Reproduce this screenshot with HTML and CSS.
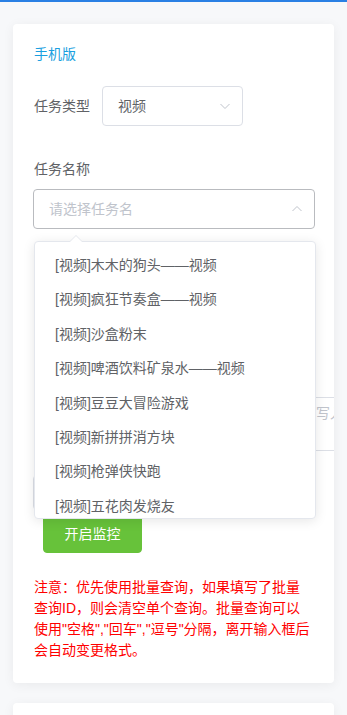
FILE: index.html
```html
<!DOCTYPE html>
<html lang="zh-CN">
<head>
  <meta charset="UTF-8">
  <meta name="viewport" content="width=device-width, initial-scale=1.0">
  <title>任务监控 - 手机版</title>
  <link rel="stylesheet" href="styles.css">
</head>
<body>
  <div class="topbar"></div>

  <main class="page">
    <section class="card">
      <div class="card-title">手机版</div>

      <form class="form">
        <div class="form-row inline">
          <label class="form-label">任务类型</label>
          <div class="select small">
            <span class="select-value">视频</span>
            <svg class="select-arrow" viewBox="0 0 14 14"><polyline points="2.5,5 7,9.5 11.5,5"/></svg>
          </div>
        </div>

        <div class="form-row stacked">
          <label class="form-label">任务名称</label>
          <div class="select wide is-open">
            <span class="select-placeholder">请选择任务名</span>
            <svg class="select-arrow" viewBox="0 0 14 14"><polyline points="2.5,9 7,4.5 11.5,9"/></svg>
          </div>
        </div>

        <!-- covered by the open dropdown, only the right end shows -->
        <div class="form-row inline batch">
          <span class="form-label"></span>
          <textarea class="textarea" rows="2" placeholder="批量查询时，可以在这里一次性写入多个ID"></textarea>
        </div>

        <div class="form-row">
          <input class="input short" type="text">
        </div>

        <button type="button" class="btn-success">开启监控</button>
      </form>

      <p class="notice">注意：优先使用批量查询，如果填写了批量查询ID，则会清空单个查询。批量查询可以使用"空格","回车","逗号"分隔，离开输入框后会自动变更格式。</p>

      <!-- open dropdown of 任务名称 -->
      <div class="dropdown">
        <div class="dropdown-wrap">
          <ul class="dropdown-list">
            <li>[视频]木木的狗头——视频</li>
            <li>[视频]疯狂节奏盒——视频</li>
            <li>[视频]沙盒粉末</li>
            <li>[视频]啤酒饮料矿泉水——视频</li>
            <li>[视频]豆豆大冒险游戏</li>
            <li>[视频]新拼拼消方块</li>
            <li>[视频]枪弹侠快跑</li>
            <li>[视频]五花肉发烧友</li>
          </ul>
        </div>
      </div>
    </section>

    <section class="card next"></section>
  </main>
</body>
</html>
```

FILE: styles.css
```css
body {
  margin: 0;
  background-color: #f7f8fa;
  font-family: "Liberation Sans", "Noto Sans CJK SC", sans-serif;
  color: #606266;
  font-size: 14px;
}

.topbar {
  height: 2px;
  background-color: #2a80e4;
}

.page {
  padding: 0 13px;
}

.card {
  position: relative;
  margin-top: 22px;
  padding: 20px 19px 22px 20px;
  background-color: #fff;
  border-radius: 4px;
  box-shadow: 0 2px 12px rgba(0, 0, 0, 0.06);
  overflow: hidden;
}

.card.next {
  margin-top: 20px;
  height: 200px;
}

.card-title {
  font-size: 14px;
  line-height: 20px;
  color: #1a9fe0;
  padding-left: 1px;
}

.form {
  margin: 0;
}

.form-row.inline {
  display: flex;
  align-items: center;
  margin-top: 22px;
}

.form-row.inline .form-label {
  width: 69px;
  flex: none;
  line-height: 40px;
  padding-left: 1px;
  box-sizing: border-box;
}

.form-row.stacked {
  margin-top: 33px;
}

.form-row.stacked .form-label {
  display: block;
  line-height: 20px;
  margin-bottom: 10px;
  padding-left: 1px;
}

.form-row.batch {
  margin-top: 168px;
  align-items: flex-start;
}

.select {
  position: relative;
  box-sizing: border-box;
  height: 40px;
  border: 1px solid #dcdfe6;
  border-radius: 4px;
  padding: 0 30px 0 15px;
  line-height: 38px;
  background-color: #fff;
}

.select.small {
  width: 141px;
}

.select.wide {
  width: 100%;
}

.select.is-open {
  border-color: #b9bbbf;
}

.select-value {
  color: #606266;
}

.select-placeholder {
  color: #c0c4cc;
}

.select-arrow {
  position: absolute;
  right: 10px;
  top: 12px;
  width: 14px;
  height: 14px;
  fill: none;
  stroke: #c0c4cc;
  stroke-width: 1;
}

.textarea {
  display: block;
  flex: none;
  width: 260px;
  height: 54px;
  box-sizing: border-box;
  margin: 0;
  padding: 5px 15px 5px 17px;
  border: 1px solid #dcdfe6;
  border-radius: 4px;
  font-family: inherit;
  font-size: 14px;
  line-height: 21px;
  resize: none;
  color: #606266;
}

.textarea::placeholder {
  color: #c0c4cc;
}

.input {
  display: block;
  box-sizing: border-box;
  margin-top: 24px;
  height: 35px;
  padding: 0 15px;
  border: 1px solid #dcdfe6;
  border-radius: 4px;
  font-family: inherit;
  font-size: 14px;
}

.input.short {
  width: 200px;
}

.btn-success {
  display: block;
  margin: 3px 0 0 10px;
  width: 99px;
  height: 40px;
  padding: 0;
  border: 1px solid #67c23a;
  border-radius: 4px;
  background-color: #67c23a;
  color: #fff;
  font-family: inherit;
  font-size: 14px;
}

.notice {
  margin: 24px 0 0;
  padding-left: 1px;
  max-width: 278px;
  color: #ff0000;
  font-size: 14px;
  line-height: 21px;
}

.dropdown {
  position: absolute;
  left: 21px;
  top: 217px;
  width: 282px;
  box-sizing: border-box;
  border: 1px solid #e4e7ed;
  border-radius: 4px;
  background-color: #fff;
  box-shadow: 0 2px 12px rgba(0, 0, 0, 0.1);
  z-index: 10;
}

.dropdown:before,
.dropdown:after {
  content: "";
  position: absolute;
  left: 35px;
  width: 0;
  height: 0;
  border: 6px solid transparent;
  border-top-width: 0;
}

.dropdown:before {
  top: -7px;
  border-bottom-color: #e4e7ed;
}

.dropdown:after {
  top: -6px;
  border-bottom-color: #fff;
}

.dropdown-wrap {
  height: 276px;
  overflow: hidden;
}

.dropdown-list {
  list-style: none;
  margin: 0;
  padding: 6px 0;
}

.dropdown-list li {
  height: 34.4px;
  line-height: 34.4px;
  padding: 0 20px;
  color: #606266;
  white-space: nowrap;
}
```
